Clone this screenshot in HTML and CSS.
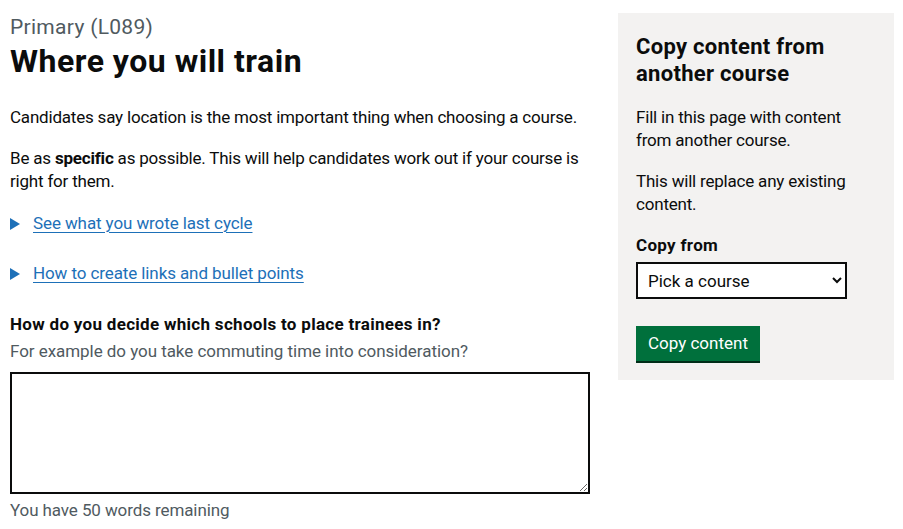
FILE: index.html
```html
<!DOCTYPE html>
<html lang="en">
<head>
<meta charset="utf-8">
<title>Where you will train</title>
<link rel="stylesheet" href="styles.css">
</head>
<body>
<div class="page">
  <main class="main">
    <span class="caption">Primary (L089)</span>
    <h1 class="title">Where you will train</h1>
    <p class="body">Candidates say location is the most important thing when choosing a course.</p>
    <p class="body">Be as <strong>specific</strong> as possible. This will help candidates work out if your course is right for them.</p>
    <div class="details"><span class="tri"></span><a href="#" class="link">See what you wrote last cycle</a></div>
    <div class="details"><span class="tri"></span><a href="#" class="link">How to create links and bullet points</a></div>
    <label class="label" for="t">How do you decide which schools to place trainees in?</label>
    <div class="hint">For example do you take commuting time into consideration?</div>
    <textarea id="t" class="textarea"></textarea>
    <div class="count">You have 50 words remaining</div>
  </main>
  <aside class="panel">
    <h2 class="panel-title">Copy content from another course</h2>
    <p class="body">Fill in this page with content from another course.</p>
    <p class="body">This will replace any existing content.</p>
    <label class="label small" for="s">Copy from</label>
    <select id="s" class="select"><option>Pick a course</option></select>
    <button class="button">Copy content</button>
  </aside>
</div>
</body>
</html>
```
FILE: styles.css
```css
* { box-sizing: border-box; }
html, body { margin: 0; padding: 0; background: #fff; }
body { font-family: Roboto, "Liberation Sans", sans-serif; color: #0b0c0c; }
.page {
  display: grid;
  grid-template-columns: 580px 276px;
  column-gap: 28px;
  padding: 13px 9px 0 10px;
  align-items: start;
}
.main { display: flex; flex-direction: column; align-items: flex-start; }
.caption { display: block; color: #505a5f; font-size: 21px; line-height: 26px; margin-top: 1px; letter-spacing: 0.3px; }
.title { font-size: 32px; line-height: 38px; font-weight: 700; margin: 2px 0 26px; letter-spacing: 0.5px; }
.body { font-size: 17px; line-height: 23px; margin: 0 0 18px; letter-spacing: -0.2px; }
.body strong { font-weight: 700; }
.details { display: flex; align-items: center; height: 23px; margin: 1px 0 26px; }
.tri {
  width: 0; height: 0;
  border-left: 10px solid #1d70b8;
  border-top: 6px solid transparent;
  border-bottom: 6px solid transparent;
  margin-right: 13px;
}
.link { color: #1d70b8; font-size: 17px; line-height: 23px; text-decoration: underline; text-underline-offset: 3px; text-decoration-thickness: 1px; letter-spacing: -0.1px; }
.label { font-size: 17px; line-height: 23px; font-weight: 700; display: block; margin: 2px 0 4px; letter-spacing: 0.3px; }
.hint { color: #505a5f; font-size: 17px; line-height: 23px; margin-bottom: 9px; letter-spacing: -0.05px; }
.textarea {
  width: 580px; height: 122px;
  border: 2px solid #0b0c0c;
  border-radius: 0;
  padding: 5px;
  font-family: inherit; font-size: 17px;
  display: block; margin: 0 0 5px;
}
.count { color: #505a5f; font-size: 17px; line-height: 23px; letter-spacing: -0.1px; }
.panel {
  background: #f3f2f1;
  padding: 20px 18px 17px;
  height: 367px;
}
.panel-title { font-size: 22px; line-height: 27px; font-weight: 700; margin: 0 0 19px; letter-spacing: 0.3px; }
.label.small { margin: 0 0 5px; }
.select {
  display: block;
  width: 211px; height: 37px;
  border: 2px solid #0b0c0c;
  border-radius: 0;
  background: #fff;
  font-family: inherit; font-size: 17px;
  padding: 0 6px;
  margin-bottom: 27px;
  color: #0b0c0c;
}
.button {
  display: block;
  background: #00703c;
  color: #fff;
  border: 0;
  border-radius: 0;
  box-shadow: 0 2px 0 #002d18;
  font-family: inherit; font-size: 17px; line-height: 23px;
  padding: 6px 12px 6px;
  height: 35px;
}
```
